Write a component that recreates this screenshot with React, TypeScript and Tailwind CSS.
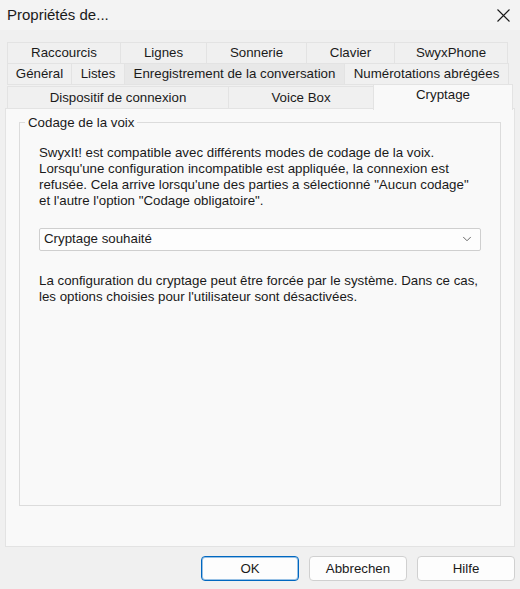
import { ChevronDown } from 'lucide-react';

type Tab = { label: string; w: string; hover?: boolean };

const rowOne: Tab[] = [
  { label: 'Raccourcis', w: 'w-[114px]' },
  { label: 'Lignes', w: 'w-[87px]' },
  { label: 'Sonnerie', w: 'w-[101px]' },
  { label: 'Clavier', w: 'w-[89px]' },
  { label: 'SwyxPhone', w: 'w-[114px]' },
];

const rowTwo: Tab[] = [
  { label: 'Général', w: 'w-[65px]' },
  { label: 'Listes', w: 'w-[54px]' },
  { label: 'Enregistrement de la conversation', w: 'w-[221px]', hover: true },
  { label: 'Numérotations abrégées', w: 'w-[165px]' },
];

const rowThree: Tab[] = [
  { label: 'Dispositif de connexion', w: 'w-[222px]' },
  { label: 'Voice Box', w: 'w-[146px]' },
];

const TabButton = ({ tab, h }: { tab: Tab; h: string }) => (
  <div
    className={`${tab.w} ${h} flex items-center justify-center border border-[#e3e3e3] -ml-px first:ml-0 ${
      tab.hover ? 'bg-[#e8e8e8]' : 'bg-[#f0f0f0]'
    }`}
  >
    {tab.label}
  </div>
);

const Button = ({ label, primary }: { label: string; primary?: boolean }) => (
  <button
    className={`w-[98px] h-[25px] rounded-[4px] bg-[#fdfdfd] text-[13.3px] border ${
      primary ? 'border-[#0067c0] ring-1 ring-inset ring-[#0067c0]/40' : 'border-[#d0d0d0]'
    }`}
  >
    {label}
  </button>
);

export default function App() {
  return (
    <div className="w-[520px] h-[589px] bg-[#f0f0f0] flex flex-col text-[#1a1a1a] font-['Liberation_Sans',Arial,sans-serif] text-[13.3px]">
      {/* Title bar */}
      <div className="h-[30px] flex items-center justify-between pl-[7px] pr-[10px] bg-[#f3f3f3]">
        <span className="text-[15px]">Propriétés de...</span>
        <svg width="13" height="13" viewBox="0 0 13 13" className="mt-px">
          <path d="M0.5 0.5 L12.5 12.5 M12.5 0.5 L0.5 12.5" stroke="#1a1a1a" strokeWidth="1.1" />
        </svg>
      </div>

      {/* Tab strip */}
      <div className="mt-[12px] pl-[7px] flex flex-col">
        <div className="flex">
          {rowOne.map((t) => (
            <TabButton key={t.label} tab={t} h="h-[22px]" />
          ))}
        </div>
        <div className="flex -mt-px">
          {rowTwo.map((t) => (
            <TabButton key={t.label} tab={t} h="h-[22px]" />
          ))}
        </div>
        <div className="flex -mt-px items-end">
          {rowThree.map((t) => (
            <TabButton key={t.label} tab={t} h="h-[23px]" />
          ))}
          <div className="relative z-10 -ml-[1px] w-[140px] h-[26px] -mb-px flex items-start justify-center bg-[#f9f9f9] border border-b-0 border-[#e3e3e3]">
            Cryptage
          </div>
        </div>
      </div>

      {/* Page */}
      <div className="ml-[5px] w-[510px] h-[439px] -mt-px bg-[#f9f9f9] border border-[#e3e3e3] px-[13px] pt-[4px]">
        <fieldset className="h-[393px] border border-[#dcdcdc] px-[19px] pt-[12px]">
          <legend className="-ml-[14px] px-[3px]">Codage de la voix</legend>
          <p className="leading-[16px]">
            SwyxIt! est compatible avec différents modes de codage de la voix.
            <br />
            Lorsqu'une configuration incompatible est appliquée, la connexion est
            <br />
            refusée. Cela arrive lorsqu'une des parties a sélectionné "Aucun codage"
            <br />
            et l'autre l'option "Codage obligatoire".
          </p>
          <div className="mt-[19px] h-[23px] flex items-center justify-between bg-[#fdfdfd] border border-[#cfcfcf] rounded-[2px] pl-[4px] pr-[6px]">
            <span>Cryptage souhaité</span>
            <ChevronDown className="size-[14px] text-[#555]" strokeWidth={1.5} />
          </div>
          <p className="mt-[22px] leading-[16px]">
            La configuration du cryptage peut être forcée par le système. Dans ce cas,
            <br />
            les options choisies pour l'utilisateur sont désactivées.
          </p>
        </fieldset>
      </div>

      {/* Dialog buttons */}
      <div className="flex justify-end gap-[10px] pr-[5px] mt-[9px]">
        <Button label="OK" primary />
        <Button label="Abbrechen" />
        <Button label="Hilfe" />
      </div>
    </div>
  );
}
